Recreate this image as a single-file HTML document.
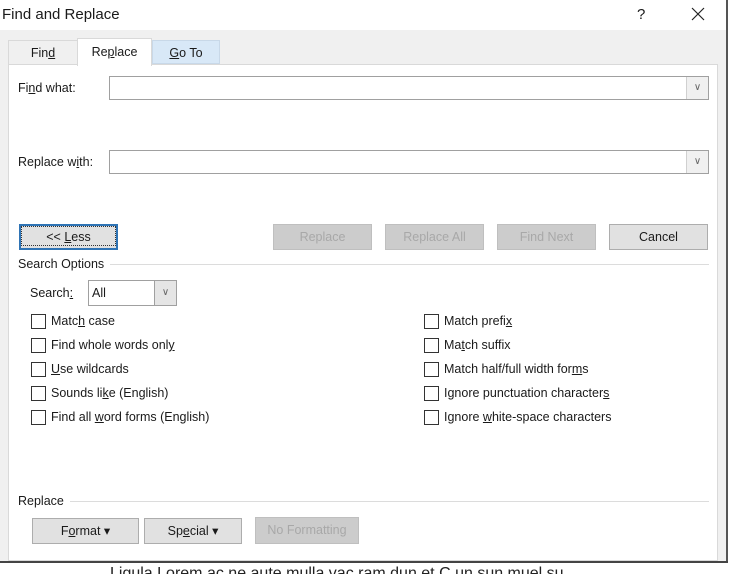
<!DOCTYPE html><html><head><style>
body{margin:0;width:731px;height:574px;position:relative;overflow:hidden;background:#fff;font-family:"Liberation Sans",sans-serif;font-size:12.5px;color:#1a1a1a}
.a{position:absolute}
.btn{position:absolute;background:#e1e1e1;border:1px solid #adadad;box-sizing:border-box;text-align:center;line-height:24px}
.dis{color:#a8a8a8;background:#cccccc;border-color:#bfbfbf}
.cb{position:absolute;width:13px;height:13px;border:1px solid #333;background:#fff}
.in{position:absolute;border:1px solid #a0a0a0;background:#fff;box-sizing:border-box}
.dd{position:absolute;right:0;top:0;bottom:0;width:21px;background:#f0f0f0;border-left:1px solid #d0d0d0;text-align:center;color:#666;font-size:10px}
u{text-decoration:underline}
</style></head><body>
<div class="a" style="left:0;top:30px;width:727px;height:532px;background:#f0f0f0"></div>
<div class="a" style="left:726px;top:0;width:2px;height:562px;background:#555"></div>
<div class="a" style="left:0;top:561px;width:728px;height:2px;background:#444"></div>
<div class="a" style="left:110px;top:566px;width:620px;height:8px;overflow:hidden;font-size:16px;line-height:16px;color:#222">Ligula Lorem ac ne aute mulla vac ram dun et C un sun muel su</div>
<div class="a" style="left:2px;top:6px;font-size:15px">Find and Replace</div>
<div class="a" style="left:637px;top:6px;font-size:15px">?</div>
<svg class="a" style="left:691px;top:7px" width="14" height="14"><path d="M1 1L13 13M13 1L1 13" stroke="#222" stroke-width="1.2"/></svg>
<div class="a" style="left:8px;top:40px;width:70px;height:24px;border:1px solid #d9d9d9;border-bottom:none;box-sizing:border-box;text-align:center;line-height:24px">Fin<u>d</u></div>
<div class="a" style="left:152px;top:40px;width:68px;height:24px;background:#d8e8f7;border:1px solid #c8d8e8;box-sizing:border-box;text-align:center;line-height:24px"><u>G</u>o To</div>
<div class="a" style="left:8px;top:64px;width:710px;height:497px;background:#fff;border:1px solid #d9d9d9;box-sizing:border-box"></div>
<div class="a" style="left:77px;top:38px;width:75px;height:28px;background:#fff;border:1px solid #d9d9d9;border-bottom:none;box-sizing:border-box;text-align:center;line-height:26px">Re<u>p</u>lace</div>
<div class="a" style="left:18px;top:81px">Fi<u>n</u>d what:</div>
<div class="in" style="left:109px;top:76px;width:600px;height:24px"><div class="dd" style="line-height:22px">∨</div></div>
<div class="a" style="left:18px;top:155px">Replace w<u>i</u>th:</div>
<div class="in" style="left:109px;top:150px;width:600px;height:24px"><div class="dd" style="line-height:22px">∨</div></div>
<div class="btn" style="left:19px;top:224px;width:99px;height:26px;border:2px solid #2f74b5;line-height:20px"><div style="border:1px dotted #333;height:18px">&lt;&lt; <u>L</u>ess</div></div>
<div class="btn dis" style="left:273px;top:224px;width:99px;height:26px">Replace</div>
<div class="btn dis" style="left:385px;top:224px;width:99px;height:26px">Replace All</div>
<div class="btn dis" style="left:497px;top:224px;width:99px;height:26px">Find Next</div>
<div class="btn" style="left:609px;top:224px;width:99px;height:26px">Cancel</div>
<div class="a" style="left:18px;top:257px">Search Options</div>
<div class="a" style="left:110px;top:264px;width:599px;height:1px;background:#dcdcdc"></div>
<div class="a" style="left:30px;top:286px">Search<u>:</u></div>
<div class="in" style="left:88px;top:280px;width:89px;height:26px"><div class="a" style="left:3px;top:5px">All</div><div class="dd" style="line-height:24px;background:#e5e5e5;border-left:1px solid #a0a0a0">∨</div></div>
<div class="cb" style="left:31px;top:314px"></div><div class="a" style="left:51px;top:314px">Matc<u>h</u> case</div>
<div class="cb" style="left:31px;top:338px"></div><div class="a" style="left:51px;top:338px">Find whole words onl<u>y</u></div>
<div class="cb" style="left:31px;top:362px"></div><div class="a" style="left:51px;top:362px"><u>U</u>se wildcards</div>
<div class="cb" style="left:31px;top:386px"></div><div class="a" style="left:51px;top:386px">Sounds li<u>k</u>e (English)</div>
<div class="cb" style="left:31px;top:410px"></div><div class="a" style="left:51px;top:410px">Find all <u>w</u>ord forms (English)</div>
<div class="cb" style="left:424px;top:314px"></div><div class="a" style="left:444px;top:314px">Match prefi<u>x</u></div>
<div class="cb" style="left:424px;top:338px"></div><div class="a" style="left:444px;top:338px">Ma<u>t</u>ch suffix</div>
<div class="cb" style="left:424px;top:362px"></div><div class="a" style="left:444px;top:362px">Match half/full width for<u>m</u>s</div>
<div class="cb" style="left:424px;top:386px"></div><div class="a" style="left:444px;top:386px">Ignore punctuation character<u>s</u></div>
<div class="cb" style="left:424px;top:410px"></div><div class="a" style="left:444px;top:410px">Ignore <u>w</u>hite-space characters</div>
<div class="a" style="left:18px;top:494px">Replace</div>
<div class="a" style="left:70px;top:501px;width:639px;height:1px;background:#dcdcdc"></div>
<div class="btn" style="left:32px;top:518px;width:107px;height:26px">F<u>o</u>rmat ▾</div>
<div class="btn" style="left:144px;top:518px;width:98px;height:26px">Sp<u>e</u>cial ▾</div>
<div class="btn dis" style="left:255px;top:517px;width:104px;height:27px">No Formatting</div>
</body></html>
